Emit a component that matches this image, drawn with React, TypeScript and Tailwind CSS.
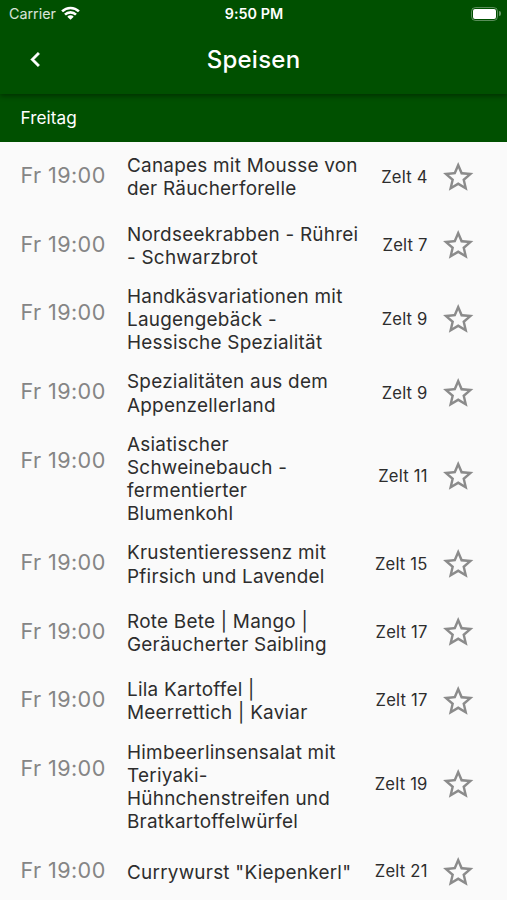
import React from 'react';

interface Dish {
  id: number;
  time: string;
  title: string;
  place: string;
}

const dishes: Dish[] = [
  { id: 1, time: 'Fr 19:00', title: 'Canapes mit Mousse von\nder Räucherforelle', place: 'Zelt 4' },
  { id: 2, time: 'Fr 19:00', title: 'Nordseekrabben - Rührei\n- Schwarzbrot', place: 'Zelt 7' },
  { id: 3, time: 'Fr 19:00', title: 'Handkäsvariationen mit\nLaugengebäck -\nHessische Spezialität', place: 'Zelt 9' },
  { id: 4, time: 'Fr 19:00', title: 'Spezialitäten aus dem\nAppenzellerland', place: 'Zelt 9' },
  { id: 5, time: 'Fr 19:00', title: 'Asiatischer\nSchweinebauch -\nfermentierter\nBlumenkohl', place: 'Zelt 11' },
  { id: 6, time: 'Fr 19:00', title: 'Krustentieressenz mit\nPfirsich und Lavendel', place: 'Zelt 15' },
  { id: 7, time: 'Fr 19:00', title: 'Rote Bete | Mango |\nGeräucherter Saibling', place: 'Zelt 17' },
  { id: 8, time: 'Fr 19:00', title: 'Lila Kartoffel |\nMeerrettich | Kaviar', place: 'Zelt 17' },
  { id: 9, time: 'Fr 19:00', title: 'Himbeerlinsensalat mit\nTeriyaki-\nHühnchenstreifen und\nBratkartoffelwürfel', place: 'Zelt 19' },
  { id: 10, time: 'Fr 19:00', title: 'Currywurst "Kiepenkerl"', place: 'Zelt 21' },
];

const StarIcon = () => (
  <svg className="w-[36.4px] h-[36.4px] fill-[#8b8b8b]" viewBox="0 0 24 24">
    <path d="M22 9.24l-7.19-.62L12 2 9.19 8.63 2 9.24l5.46 4.73L5.82 21 12 17.27 18.18 21l-1.63-7.03L22 9.24zM12 15.4l-3.76 2.27 1-4.28-3.32-2.88 4.38-.38L12 6.1l1.71 4.04 4.38.38-3.32 2.88 1 4.28L12 15.4z" />
  </svg>
);

const WifiIcon = () => (
  <svg className="w-[19px] h-[14px] mb-[2px]" viewBox="0 0 19 14" fill="none" stroke="white" strokeWidth="2.6">
    <path d="M1.1 5.4a12 12 0 0 1 16.8 0" />
    <path d="M4 8.6a7.8 7.8 0 0 1 11 0" />
    <path d="M9.5 13.8L6.3 10.7a4.5 4.5 0 0 1 6.4 0z" fill="white" stroke="none" />
  </svg>
);

const StatusBar = () => (
  <div className="grid grid-cols-3 items-center h-[27px] pl-[9px] pr-[6px]">
    <div className="flex items-center gap-[5.5px]">
      <span className="text-[14.3px] tracking-[0px] text-white/85">Carrier</span>
      <WifiIcon />
    </div>
    <span className="pr-[2px] text-center text-[14.3px] font-semibold tracking-[0.05px] whitespace-nowrap">9:50 PM</span>
    <div className="flex items-center justify-end gap-px">
      <div className="w-[27.5px] h-[14px] rounded-[4.5px] border-[1.5px] border-white/35 p-px">
        <div className="h-full rounded-[2px] bg-white" />
      </div>
      <div className="w-[2px] h-[5px] rounded-r-full bg-white/40" />
    </div>
  </div>
);

const DishRow: React.FC<{ dish: Dish }> = ({ dish }) => (
  <li className="flex items-start min-h-[68.4px] pl-[20.5px] pr-[31px]">
    <span className="w-[106.5px] shrink-0 pt-[19px] text-[21.6px] leading-[29px] tracking-[0.4px] text-[#858585] whitespace-nowrap">
      {dish.time}
    </span>
    <p className="flex-1 self-center pt-[5.9px] pb-[3.9px] text-[18.9px] leading-[23.2px] tracking-[0.25px] text-[#2d2d2d] whitespace-pre">
      {dish.title}
    </p>
    <div className="flex items-center self-stretch max-h-[98px] shrink-0 gap-[12px] pt-px">
      <span className="text-[16.6px] tracking-[0.2px] text-[#2d2d2d]">{dish.place}</span>
      <StarIcon />
    </div>
  </li>
);

const App: React.FC = () => {
  return (
    <div className="w-full h-[900px] overflow-hidden bg-[#fafafa] font-['Inter',sans-serif]">
      <header className="relative z-10 h-[94px] bg-[#005000] text-white shadow-[0_2px_5px_rgba(0,0,0,0.4)]">
        <StatusBar />
        <div className="grid grid-cols-[70px_1fr_70px] items-center h-[65px]">
          <button className="pl-[20.5px]" aria-label="Zurück">
            <svg className="w-[29px] h-[29px] fill-white stroke-white stroke-[0.4]" viewBox="0 0 24 24">
              <path d="M15.41 7.41L14 6l-6 6 6 6 1.41-1.41L10.83 12z" />
            </svg>
          </button>
          <h1 className="text-center text-[24px] font-medium tracking-[0.25px]">Speisen</h1>
        </div>
      </header>
      <div className="flex items-center h-[48.3px] pl-[20.5px] bg-[#005000] text-[17.2px] tracking-[0.05px] text-white">
        Freitag
      </div>
      <ul>
        {dishes.map((dish) => (
          <DishRow key={dish.id} dish={dish} />
        ))}
      </ul>
    </div>
  );
};

export default App;
